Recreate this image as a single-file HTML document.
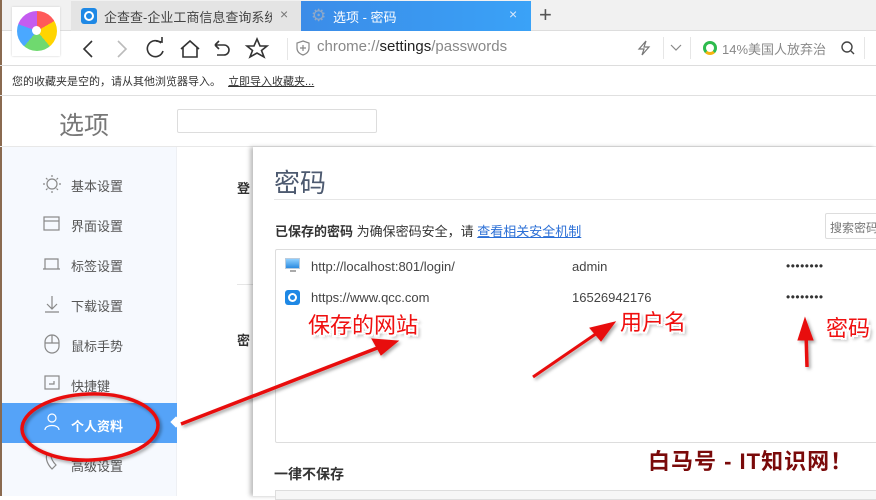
<!DOCTYPE html>
<html><head><meta charset="utf-8">
<style>
*{margin:0;padding:0;box-sizing:border-box}
body{width:876px;height:496px;overflow:hidden;position:relative;background:#fff;font-family:"Liberation Sans","Noto Sans CJK SC",sans-serif;color:#333}
.a{position:absolute;white-space:nowrap}
.ann{position:absolute;white-space:nowrap;color:#f01010;font-size:22px;font-family:"Noto Sans CJK SC",sans-serif;text-shadow:-2px 0 #fff,2px 0 #fff,0 -2px #fff,0 2px #fff,-2px -2px #fff,2px 2px #fff,-2px 2px #fff,2px -2px #fff,3px 3px 3px #999;line-height:1}
.side{font-size:13px;color:#555}
</style></head><body>
<div class="a" style="left:0;top:0;width:876px;height:31px;background:#f1f1f1;border-bottom:1px solid #ddd"></div>
<div class="a" style="left:0;top:0;width:2px;height:496px;background:#8a6a50"></div>
<div class="a" style="left:71px;top:1px;width:230px;height:30px;background:#e4e4e4"></div>
<div class="a" style="left:81px;top:8px;width:16px;height:16px;background:#1e88e5;border-radius:3px"></div>
<div class="a" style="left:84px;top:11px;width:10px;height:10px;border:2px solid #fff;border-radius:50%"></div>
<div class="a" style="left:104px;top:7px;font-size:13px;color:#444;width:168px;overflow:hidden">企查查-企业工商信息查询系统_</div>
<div class="a" style="left:280px;top:6px;font-size:14px;color:#777">×</div>
<div class="a" style="left:301px;top:1px;width:230px;height:30px;background:linear-gradient(90deg,#3b8ce8,#3aa2f7)"></div>
<div class="a" style="left:311px;top:6px;font-size:17px;color:#8fa8c8">⚙</div>
<div class="a" style="left:333px;top:7px;font-size:13px;color:#fff">选项 - 密码</div>
<div class="a" style="left:509px;top:6px;font-size:14px;color:#dbe9fb">×</div>
<div class="a" style="left:539px;top:2px;font-size:22px;color:#555;font-weight:300">+</div>
<div class="a" style="left:12px;top:7px;width:48px;height:49px;background:#fff;box-shadow:0 0 2px #ccc"></div>
<div class="a" style="left:17px;top:11px;width:40px;height:40px;border-radius:50%;background:conic-gradient(#ff5a5a 0 60deg,#ffd400 60deg 140deg,#6fd96f 140deg 220deg,#4aa8ff 220deg 290deg,#c45cf0 290deg 360deg)"></div>
<div class="a" style="left:32px;top:26px;width:9px;height:9px;border-radius:50%;background:#fff"></div>
<div class="a" style="left:0;top:65px;width:876px;height:1px;background:#ddd"></div>
<svg class="a" style="left:75px;top:36px" width="200" height="26" fill="none" stroke="#333" stroke-width="1.6">
<path d="M17 5 L9 13 L17 21"/>
<path d="M43 5 L51 13 L43 21" stroke="#bbb"/>
<path d="M86 7 A8 8 0 1 0 88 15"/><path d="M81 5 L87 6 L87 1"/>
<path d="M106 13 L115 5 L124 13 M108 11 V21 H122 V11"/>
<path d="M140 9 H149 A5 5 0 0 1 149 19 H142 M140 9 L144 5 M140 9 L144 13"/>
<path d="M182 3 L185 10 L192 10 L186.5 14.5 L189 21 L182 17 L175 21 L177.5 14.5 L172 10 L179 10 Z"/>
</svg>
<div class="a" style="left:287px;top:38px;width:1px;height:22px;background:#e6e6e6"></div>
<svg class="a" style="left:296px;top:40px" width="14" height="16" fill="none" stroke="#888" stroke-width="1.2"><path d="M7 1 L13 3 V8 C13 12 10 14 7 15 C4 14 1 12 1 8 V3 Z M7 5 V11 M4 8 H10"/></svg>
<div class="a" style="left:317px;top:38px;font-size:15px;color:#888">chrome://<span style="color:#222">settings</span>/passwords</div>
<svg class="a" style="left:634px;top:39px" width="20" height="18" fill="none" stroke="#777" stroke-width="1.2"><path d="M12 2 L5 10 H10 L8 16 L15 8 H10 Z"/></svg>
<div class="a" style="left:663px;top:37px;width:1px;height:22px;background:#e6e6e6"></div>
<svg class="a" style="left:669px;top:43px" width="14" height="10" fill="none" stroke="#888" stroke-width="1.2"><path d="M2 2 L7 7 L12 2"/></svg>
<div class="a" style="left:690px;top:37px;width:1px;height:22px;background:#e6e6e6"></div>
<div class="a" style="left:703px;top:41px;width:14px;height:14px;border-radius:50%;border:3px solid #2dbb4d;border-bottom-color:#f5b40f"></div>
<div class="a" style="left:722px;top:39px;font-size:13px;color:#888;width:108px;overflow:hidden">14%美国人放弃治</div>
<svg class="a" style="left:840px;top:40px" width="16" height="16" fill="none" stroke="#444" stroke-width="1.4"><circle cx="7" cy="7" r="5"/><path d="M11 11 L14 14"/></svg>
<div class="a" style="left:864px;top:37px;width:1px;height:22px;background:#e6e6e6"></div>
<div class="a" style="left:12px;top:73px;font-size:11px;color:#333">您的收藏夹是空的，请从其他浏览器导入。 <span style="text-decoration:underline;margin-left:4px">立即导入收藏夹...</span></div>
<div class="a" style="left:0;top:95px;width:876px;height:1px;background:#e0e0e0"></div>
<div class="a" style="left:59px;top:106px;font-size:25px;color:#777">选项</div>
<div class="a" style="left:177px;top:109px;width:200px;height:24px;border:1px solid #ddd;border-radius:2px"></div>
<div class="a" style="left:0;top:146px;width:876px;height:1px;background:#e8e8e8"></div>
<div class="a" style="left:2px;top:147px;width:175px;height:349px;background:#f6f9fe;border-right:1px solid #eef0f4"></div>
<div class="a" style="left:2px;top:403px;width:175px;height:40px;background:#55a3f8"></div>
<div class="a" style="left:172px;top:418px;width:8px;height:8px;background:#fff;transform:rotate(45deg)"></div>
<svg class="a" style="left:42px;top:173px" width="22" height="300" fill="none" stroke="#888" stroke-width="1.2">
<circle cx="10" cy="11" r="5"/><path d="M10 2V4M10 18V20M1 11H3M17 11H19M4 5L5.5 6.5M16 5L14.5 6.5M4 17L5.5 15.5M16 17L14.5 15.5"/>
<rect x="2" y="44" width="15" height="13"/><path d="M2 48H17"/>
<path d="M3 96V86H16V96M1 96H18"/>
<path d="M10 123V136M5 131L10 136L15 131M3 139H17"/>
<rect x="3" y="162" width="14" height="18" rx="7"/><path d="M3 170H17M10 162V170"/>
<rect x="3" y="203" width="14" height="13"/><path d="M7 211H12V208"/>
<circle cx="10" cy="245" r="4" stroke="#fff"/><path d="M3 257C3 251 17 251 17 257" stroke="#fff"/>
<path d="M5 281C3 286 6 292 10 296L14 292C11 289 9 285 9 282Z"/>
</svg>
<div class="a side" style="left:71px;top:176px">基本设置</div>
<div class="a side" style="left:71px;top:216px">界面设置</div>
<div class="a side" style="left:71px;top:256px">标签设置</div>
<div class="a side" style="left:71px;top:296px">下载设置</div>
<div class="a side" style="left:71px;top:336px">鼠标手势</div>
<div class="a side" style="left:71px;top:376px">快捷键</div>
<div class="a side" style="left:71px;top:416px;color:#fff;font-weight:bold">个人资料</div>
<div class="a side" style="left:71px;top:456px">高级设置</div>
<div class="a" style="left:237px;top:178px;font-size:13px;font-weight:bold;color:#333">登</div>
<div class="a" style="left:237px;top:284px;width:20px;height:1px;background:#e6e6e6"></div>
<div class="a" style="left:237px;top:330px;font-size:13px;font-weight:bold;color:#333">密</div>
<div class="a" style="left:253px;top:147px;width:623px;height:349px;background:#fff;box-shadow:-3px 0 4px rgba(0,0,0,.25)"></div>
<div class="a" style="left:274px;top:163px;font-size:26px;color:#4d5a70">密码</div>
<div class="a" style="left:274px;top:199px;width:602px;height:1px;background:#e6e6e6"></div>
<div class="a" style="left:275px;top:221px;font-size:13px;color:#333"><b>已保存的密码</b> 为确保密码安全，请 <span style="color:#2b6fd6;text-decoration:underline">查看相关安全机制</span></div>
<div class="a" style="left:825px;top:213px;width:60px;height:26px;border:1px solid #ddd;border-radius:2px;font-size:12px;color:#777;padding:5px 0 0 4px;overflow:hidden">搜索密码</div>
<div class="a" style="left:275px;top:249px;width:610px;height:194px;border:1px solid #ddd;border-radius:2px"></div>
<div class="a" style="left:285px;top:258px;width:15px;height:11px;background:linear-gradient(#8fd0ff,#2b8be0);border:1px solid #bcd"></div>
<div class="a" style="left:290px;top:270px;width:6px;height:2px;background:#aaa"></div>
<div class="a" style="left:285px;top:290px;width:15px;height:15px;background:#1e88e5;border-radius:3px"></div>
<div class="a" style="left:288px;top:293px;width:9px;height:9px;border:2px solid #fff;border-radius:50%"></div>
<div class="a" style="left:311px;top:259px;font-size:13px;color:#444">http://localhost:801/login/</div>
<div class="a" style="left:311px;top:290px;font-size:13px;color:#444">https://www.qcc.com</div>
<div class="a" style="left:572px;top:259px;font-size:13px;color:#444">admin</div>
<div class="a" style="left:572px;top:290px;font-size:13px;color:#444">16526942176</div>
<div class="a" style="left:786px;top:259px;font-size:12px;color:#333;letter-spacing:0.5px">••••••••</div>
<div class="a" style="left:786px;top:290px;font-size:12px;color:#333;letter-spacing:0.5px">••••••••</div>
<div class="a" style="left:274px;top:464px;font-size:14px;color:#333;font-weight:bold">一律不保存</div>
<div class="a" style="left:275px;top:490px;width:610px;height:10px;border:1px solid #ddd;background:#f6f6f6"></div>
<div class="a" style="left:648px;top:444px;font-size:22px;color:#7a0a0a;font-weight:bold;letter-spacing:1px">白马号 - IT知识网！</div>
<div class="ann" style="left:308px;top:313px">保存的网站</div>
<div class="ann" style="left:620px;top:310px">用户名</div>
<div class="ann" style="left:826px;top:316px">密码</div>
<svg class="a" style="left:0;top:0" width="876" height="496">
<defs><filter id="s"><feDropShadow dx="2" dy="2" stdDeviation="1.5" flood-color="#000" flood-opacity=".35"/></filter></defs>
<g filter="url(#s)" stroke="#e81010" fill="#e81010">
<ellipse cx="90" cy="427" rx="68" ry="33" fill="none" stroke-width="3.5" transform="rotate(-2 90 427)"/>
<path d="M181 424 L385 345" stroke-width="3.5"/><path d="M398 341 L372 339 L381 355 Z"/>
<path d="M533 377 L603 329" stroke-width="3"/><path d="M615 322 L590 328 L601 341 Z"/>
<path d="M807 367 L806 332" stroke-width="3.5"/><path d="M805 318 L798 340 L813 340 Z"/>
</g>
</svg>
</body></html>
